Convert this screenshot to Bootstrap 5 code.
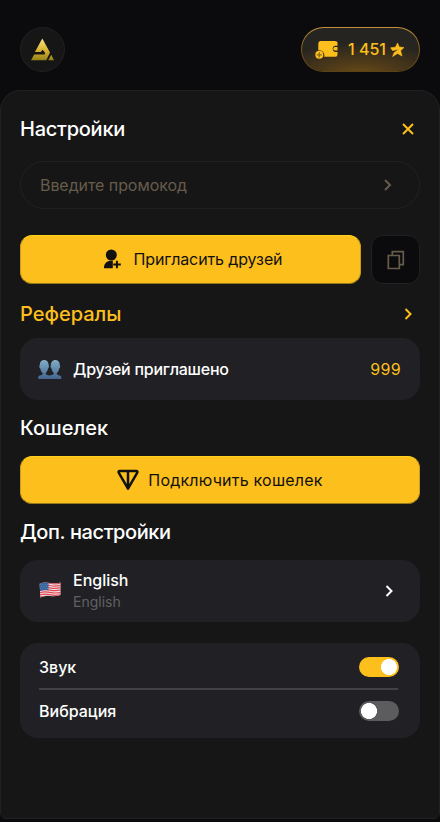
<!DOCTYPE html>
<html lang="ru" data-bs-theme="dark">
<head>
<meta charset="utf-8">
<meta name="viewport" content="width=device-width, initial-scale=1">
<title>Настройки</title>
<link href="https://cdn.jsdelivr.net/npm/bootstrap@5.3.0/dist/css/bootstrap.min.css" rel="stylesheet">
<style>
:root { --gold: #fdbf1b; --panel: #161617; --tile: #212125; --muted-gold: #665c4c; }
body { background: #0b0b0d; color: #fff; font-family: Inter, "Liberation Sans", sans-serif; font-size: 16px; line-height: 24px; height: 822px; overflow: hidden; }
svg { display: block; flex: none; }
.app-header { height: 90px; padding: 27px 20px 18px; }
.logo-btn { width: 45px; height: 45px; background: #161617; border: 1px solid #212122; }
.balance { width: 119px; height: 45px; padding: 0 14px 0 13px; color: var(--gold);
  border: 1px solid transparent; border-radius: 23px;
  background: radial-gradient(ellipse 75% 75% at 50% 110%, #6b4d15, #49371a 50%, transparent) padding-box,
    linear-gradient(#242422, #2b261d) padding-box,
    linear-gradient(#c4913a, #7d5c1d 50%, #5b4214) border-box; }
.balance-value { font-size: 16px; font-weight: 500; line-height: 22px; padding-bottom: 2px; }
.sheet { height: 729px; background: var(--panel); border: 1px solid #212123; border-radius: 20px 20px 6px 6px; padding: 24px 19px 0; }
.heading { height: 28px; font-size: 20px; line-height: 28px; font-weight: 500; }
.heading-tight { letter-spacing: -.25px; }
.heading-tighter { letter-spacing: -.4px; }
.heading-gap { margin-top: 14px; }
.gold { color: var(--gold); }
.promo { height: 48px; margin-top: 18px; padding: 0 26px 0 19px; border: 1px solid #212123; border-radius: 24px; color: var(--muted-gold); }
.promo input { color: var(--muted-gold); font-size: 16px; letter-spacing: -.07px; outline: 0; }
.promo input::placeholder { color: var(--muted-gold); opacity: 1; }
.invite-row { margin-top: 26px; height: 49px; gap: 10px; }
.btn-gold { --bs-btn-color: #111; --bs-btn-bg: var(--gold); --bs-btn-hover-bg: #ffca3a; --bs-btn-hover-color: #111; --bs-btn-active-bg: #eeb010; --bs-btn-font-size: 16px; --bs-btn-padding-y: 0;
  height: 48px; border: 1px solid; border-color: #ffd21d #cb9c1c #92791a #cb9c1c; border-radius: 12px; }
.invite-row .btn-gold { height: 49px; padding: 0 8px 1px 12px; }
.copy-btn { width: 49px; height: 49px; background: #0b0b0d; border: 1px solid #212123; border-radius: 12px; color: var(--muted-gold); }
.t-invite { letter-spacing: -.12px; }
.t-wallet { letter-spacing: .22px; margin-left: 9px; }
.tile { background: var(--tile); border-radius: 18px; }
.tile-row { height: 62px; padding: 0 19px 0 17px; }
.tile-row.referrals { margin-top: 10px; }
.tile-row .label { margin-left: 12px; font-weight: 500; }
.label.t-friends { letter-spacing: -.24px; margin-left: 11px; }
.t-count { letter-spacing: .3px; }
.sub { font-size: 14px; line-height: 20px; color: #606062; font-weight: 400; }
.lang-label { padding-bottom: 2px; }
.toggles { height: 95px; margin-top: 21px; padding: 2px 21px 0 19px; }
.toggle-row { height: 43px; font-weight: 500; }
.toggle-row:last-child { height: 42px; }
.rule { height: 2px; background: #424246; margin-right: 1px; }
.form-switch .form-check-input { width: 40px; height: 20px; margin: 0; border: 0; background-color: #5c5c5e; box-shadow: none;
  background-image: radial-gradient(circle at center, #fff 7.7px, transparent 8.3px); background-size: 20px 20px; background-position: left center; background-repeat: no-repeat; }
.form-switch .form-check-input:checked { background-color: var(--gold); background-position: right center; }
</style>
<script src="https://cdn.jsdelivr.net/npm/bootstrap@5.3.0/dist/js/bootstrap.bundle.min.js" defer></script>
</head>
<body>
<header class="app-header d-flex justify-content-between">
  <button class="logo-btn btn rounded-circle p-0 d-flex align-items-center justify-content-center" aria-label="Главная">
    <svg width="25" height="24" viewBox="0 0 25 24">
      <defs><linearGradient id="g" x1="0" y1="0" x2="0" y2="1"><stop offset="0" stop-color="#ffe583"/><stop offset=".6" stop-color="#d2ac2b"/><stop offset="1" stop-color="#938318"/></linearGradient></defs>
      <path fill="url(#g)" d="M12.300.5 20 14.500 16.300 22.200H1L4.200 16.500H14.900V14.500L12.600 11.800 10.800 14H4.900zM21.200 16.800 24 22.200h-5.700z"/>
    </svg>
  </button>
  <div class="balance d-flex align-items-center">
    <svg width="23" height="20" viewBox="0 0 23 20" fill="none">
      <path fill="#fdbf1b" d="M5.500 1h14.200Q22.500 1 22.500 3v2.700h-2.500a3.200 3.200 0 0 0 0 6.200h2.500v2.600q0 2.300-2.300 2.300H9.300A5 5 0 0 0 3.300 10.500V3.500Q3.300 1 5.500 1zM20 7h2.500v3.600H20a1.800 1.800 0 0 1 0-3.600z"/>
      <circle cx="4.300" cy="14.800" r="4" fill="#fdbf1b"/><path stroke="#8f6a18" stroke-width="1.300" d="M4.300 12.200v5.200M1.700 14.800h5.200"/>
    </svg>
    <span class="balance-value ms-auto">1 451</span>
    <svg class="ms-1" width="15" height="16" viewBox="0 0 15 16"><path fill="#fdbf1b" stroke="#fdbf1b" stroke-width=".6" stroke-linejoin="round" d="M7.600 1 9.200 5 14 5.500 10.600 8.800 12 14 7.500 11.500 2.600 14.500 4.200 10.600 9 7.300 2.500 8.600.6 5.800 5.400 5.200z"/></svg>
  </div>
</header>

<main class="sheet">
  <div class="heading heading-tight d-flex align-items-center justify-content-between">
    <span>Настройки</span>
    <svg class="me-1" width="15" height="14" viewBox="0 0 15 14" stroke="#fdbf1b" stroke-width="2" fill="none"><path d="m2 2 10 10m0-10-10 10"/></svg>
  </div>

  <form class="promo d-flex align-items-center">
    <input class="border-0 bg-transparent p-0 flex-grow-1" type="text" placeholder="Введите промокод" aria-label="Введите промокод">
    <svg width="10" height="14" viewBox="0 0 10 14" stroke="currentColor" stroke-width="2" fill="none"><path d="m2 2 5 5-5 5"/></svg>
  </form>

  <div class="invite-row d-flex">
    <button class="btn btn-gold flex-grow-1 d-flex align-items-center justify-content-center">
      <svg width="19" height="20" viewBox="0 0 19 20" fill="#111"><circle cx="8.300" cy="6" r="5.500"/><path d="M1 19.300v-1.500a6.500 6.500 0 0 1 6.500-6h2.300v7.500z"/><path d="M13.900 11.700v7.600M10.200 15.500h7.600" stroke="#fdbf1b" stroke-width="4"/><path d="M13.900 11.700v7.600M10.200 15.500h7.600" stroke="#111" stroke-width="2"/></svg>
      <span class="t-invite ms-2 ps-1">Пригласить друзей</span>
    </button>
    <button class="btn copy-btn p-0 d-flex align-items-center justify-content-center" aria-label="Скопировать">
      <svg width="18" height="20" viewBox="0 0 18 20" fill="none" stroke="currentColor" stroke-width="1.700"><path d="M1.300 5.500h11v13h-11zM5.300 5V1.700h11v13h-3.500"/></svg>
    </button>
  </div>

  <div class="heading gold d-flex align-items-center justify-content-between mt-3">
    <span>Рефералы</span>
    <svg class="me-1" width="14" height="14" viewBox="0 0 14 14" stroke="currentColor" stroke-width="2" fill="none"><path d="m3.500 2 5 5-5 5"/></svg>
  </div>
  <div class="tile tile-row referrals d-flex align-items-center">
    <svg width="25" height="21" viewBox="0 0 25 21">
      <defs><linearGradient id="p" x1="0" y1="0" x2="0" y2="1"><stop stop-color="#82adc9"/><stop offset="1" stop-color="#42658d"/></linearGradient></defs>
      <path fill="url(#p)" d="M1.200 20v-2.200c.6-1.800 4.600-1.400 4.600-3.600C4.200 13 3.600 11.400 3.300 9.600 2.200 8.500 2 7.400 2.700 6.500 2.300-.8 11.900-.8 11.700 6.500c.5 1 .3 2.200-.7 3.100-.3 1.800-.9 3.300-2.400 4.600 0 1.500 1.900 1.700 3.900 2.300 2-.6 4.400-.8 4.400-2.300-1.500-1.300-2.100-2.800-2.400-4.600-1-.9-1.200-2.100-.7-3.100-.2-7.300 9.400-7.300 9 0 .7.900.5 2-.6 3.100-.3 1.800-.9 3.400-2.500 4.600 0 2.200 4 1.800 4.600 3.600V20z"/>
    </svg>
    <span class="label t-friends">Друзей приглашено</span>
    <span class="gold ms-auto t-count">999</span>
  </div>

  <div class="heading heading-gap">Кошелек</div>
  <button class="btn btn-gold w-100 d-flex align-items-center justify-content-center heading-gap">
    <svg width="22" height="22" viewBox="0 0 22 22" fill="none" stroke="#111" stroke-width="2.500" stroke-linejoin="round"><path d="M2.700 2h16.600q1.500 0 1 1.700L11 19.700 1.700 3.700Q1.200 2 2.700 2zM11 2v17"/></svg>
    <span class="t-wallet">Подключить кошелек</span>
  </button>

  <div class="heading heading-tighter heading-gap">Доп. настройки</div>
  <div class="tile tile-row heading-gap d-flex align-items-center">
    <svg width="24" height="20" viewBox="-1 0 24 20">
      <clipPath id="f"><path d="M1.700 2.800Q6 .8 12 2T22.500 1.500V14Q17 16 12.500 15T2.300 16.500z"/></clipPath>
      <g clip-path="url(#f)"><path fill="#f0e5e8" d="M0 0h24v18H0z"/><path fill="none" stroke="#df4652" stroke-width="1.200" d="M0 3Q6 .8 12 2.200T24 1.800M0 5.300Q6 3.100 12 4.500T24 4.100M0 7.600Q6 5.400 12 6.800T24 6.400M0 9.900Q6 7.700 12 9.100T24 8.700M0 12.200Q6 10 12 11.400T24 11M0 14.500q6-2.200 12-.8t12-.4M0 16.800Q6 14.600 12 16T24 15.600"/><path fill="#35649f" d="M0 0h10.500v9.200Q6 8.500 0 10.500z"/><path stroke="#7f9dc6" stroke-width=".8" stroke-dasharray=".8 1.500" d="M2.300 3.700h8M3.200 5.500h7M2.300 7.400h8"/></g>
    </svg>
    <div class="label lang-label"><div>English</div><div class="sub">English</div></div>
    <svg class="ms-auto me-1" width="14" height="14" viewBox="0 0 14 14" stroke="#fff" stroke-width="2" fill="none"><path d="m3.500 2 5 5-5 5"/></svg>
  </div>

  <div class="tile toggles">
    <div class="toggle-row d-flex align-items-center justify-content-between form-switch p-0">
      <label for="sound">Звук</label><input class="form-check-input" type="checkbox" role="switch" id="sound" checked>
    </div>
    <div class="rule"></div>
    <div class="toggle-row d-flex align-items-center justify-content-between form-switch p-0">
      <label for="vibro">Вибрация</label><input class="form-check-input" type="checkbox" role="switch" id="vibro">
    </div>
  </div>
</main>
</body>
</html>
